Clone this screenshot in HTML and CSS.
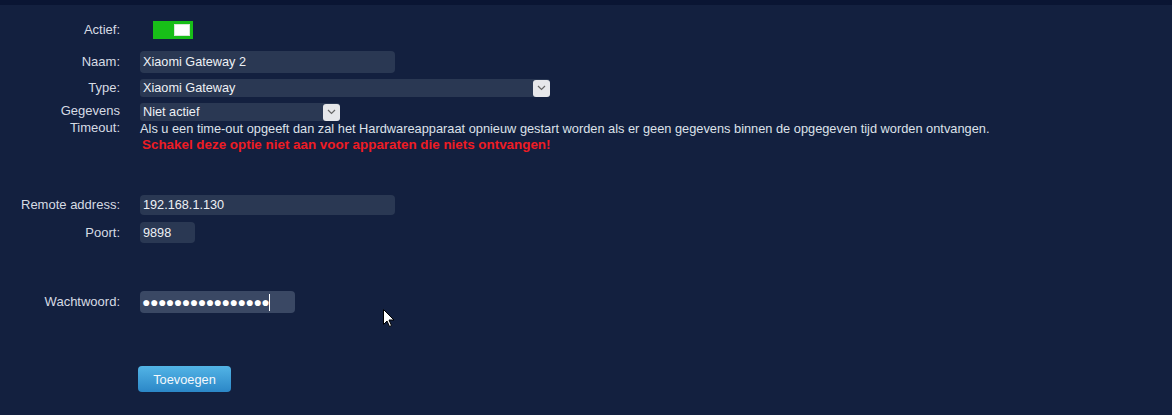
FILE: index.html
```html
<!DOCTYPE html>
<html lang="en">
<head>
    <meta charset="UTF-8">
    <title>Hardware toevoegen</title>
    <link rel="stylesheet" href="styles.css">
</head>
<body>
    <div class="topbar"></div>
    <div class="form">
        <div class="row row-actief">
            <label class="label">Actief:</label>
            <div class="toggle"><span class="knob"></span></div>
        </div>
        <div class="row row-naam">
            <label class="label">Naam:</label>
            <input class="field field-wide" type="text" value="Xiaomi Gateway 2">
        </div>
        <div class="row row-type">
            <label class="label">Type:</label>
            <div class="select select-type">
                <span class="select-text">Xiaomi Gateway</span>
                <span class="select-arrow">
                    <svg width="9" height="6" viewBox="0 0 9 6"><path d="M1 1 L4.5 4.5 L8 1" fill="none" stroke="#666" stroke-width="1.2"/></svg>
                </span>
            </div>
        </div>
        <div class="row row-timeout">
            <label class="label label-two">Gegevens<br>Timeout:</label>
            <div class="timeout-body">
                <div class="select select-timeout">
                    <span class="select-text">Niet actief</span>
                    <span class="select-arrow">
                        <svg width="9" height="6" viewBox="0 0 9 6"><path d="M1 1 L4.5 4.5 L8 1" fill="none" stroke="#666" stroke-width="1.2"/></svg>
                    </span>
                </div>
                <div class="help">Als u een time-out opgeeft dan zal het Hardwareapparaat opnieuw gestart worden als er geen gegevens binnen de opgegeven tijd worden ontvangen.</div>
                <div class="warning">Schakel deze optie niet aan voor apparaten die niets ontvangen!</div>
            </div>
        </div>
        <div class="row row-remote">
            <label class="label">Remote address:</label>
            <input class="field field-wide field-short" type="text" value="192.168.1.130">
        </div>
        <div class="row row-poort">
            <label class="label">Poort:</label>
            <input class="field field-port" type="text" value="9898">
        </div>
        <div class="row row-pw">
            <label class="label">Wachtwoord:</label>
            <div class="field field-pw"><span class="dots">●●●●●●●●●●●●●●●●</span><span class="caret"></span></div>
        </div>
        <div class="row row-button">
            <span class="label"></span>
            <button class="btn">Toevoegen</button>
        </div>
    </div>
    <svg class="cursor" width="12" height="19" viewBox="0 0 12 19">
        <path d="M0.5 0.5 L0.5 15.5 L4 12 L6.5 17.5 L8.5 16.5 L6 11 L11 11 Z" fill="#fff" stroke="#000" stroke-width="1"/>
    </svg>
</body>
</html>
```
FILE: styles.css
```css
html, body {
    margin: 0;
    padding: 0;
}

body {
    background-color: #13203f;
    color: #dde2ea;
    font-family: "Liberation Sans", Arial, sans-serif;
    font-size: 13px;
    width: 1172px;
    height: 415px;
    overflow: hidden;
    position: relative;
}

.topbar {
    height: 5px;
    background-color: #0a1533;
}

.form {
    display: flex;
    flex-direction: column;
}

.row {
    display: flex;
    align-items: center;
}

.label {
    width: 120px;
    padding-right: 20px;
    text-align: right;
    flex-shrink: 0;
    color: #d6dbe4;
    line-height: 14px;
}

.row-actief {
    margin-top: 16px;
}

.toggle {
    width: 40px;
    height: 18px;
    margin-left: 13px;
    background-color: #18be18;
    display: flex;
    align-items: center;
    justify-content: flex-end;
    box-sizing: border-box;
    padding-right: 3px;
}

.knob {
    width: 16px;
    height: 12px;
    background-color: #fff;
    box-sizing: border-box;
    border: 1px solid #d8e8d8;
}

.field {
    font-family: "Liberation Sans", Arial, sans-serif;
    font-size: 12.7px;
    color: #eef1f5;
    background-color: #2a3853;
    border: none;
    border-radius: 4px;
    outline: none;
    padding: 0 3px;
    box-sizing: border-box;
    height: 22px;
}

.field-wide {
    width: 255px;
}

.row-naam {
    margin-top: 12px;
}

.row-type {
    margin-top: 6px;
}

.select {
    display: flex;
    align-items: center;
    justify-content: space-between;
    background-color: #2a3853;
    border-radius: 3px;
    height: 18px;
    box-sizing: border-box;
    padding-left: 3px;
    font-size: 12.7px;
    color: #eef1f5;
}

.select-type {
    width: 410px;
}

.select-timeout {
    width: 200px;
}

.select-arrow {
    width: 17px;
    height: 17px;
    background-color: #e6e7ea;
    border-radius: 3px;
    display: flex;
    align-items: center;
    justify-content: center;
}

.row-timeout {
    margin-top: 6px;
    align-items: flex-start;
}

.label-two {
    line-height: 17px;
    margin-top: -1px;
}

.timeout-body {
    display: flex;
    flex-direction: column;
    align-items: flex-start;
}

.help {
    font-size: 12.8px;
    line-height: 16px;
    color: #dde2ea;
}

.warning {
    font-size: 13.4px;
    line-height: 16px;
    color: #ee1c24;
    font-weight: bold;
    padding-left: 2px;
}

.row-remote {
    margin-top: 42px;
}

.field-short {
    height: 20px;
}

.row-poort {
    margin-top: 7px;
}

.field-port {
    width: 55px;
    height: 21px;
}

.row-pw {
    margin-top: 48px;
}

.field-pw {
    width: 155px;
    background-color: #3a4864;
    display: flex;
    align-items: center;
    padding-left: 2px;
}

.dots {
    font-size: 14px;
    letter-spacing: -0.5px;
    color: #fff;
}

.caret {
    width: 1px;
    height: 17px;
    background-color: #fff;
    margin-left: 0;
}

.row-button {
    margin-top: 53px;
}

.btn {
    margin-left: -2px;
    width: 93px;
    height: 26px;
    border: none;
    border-radius: 4px;
    background: linear-gradient(to bottom, #52b4e6, #2b87c7);
    color: #f4f8fc;
    font-family: "Liberation Sans", Arial, sans-serif;
    font-size: 12.8px;
    cursor: pointer;
}

.cursor {
    position: absolute;
    left: 383px;
    top: 309px;
}
```
